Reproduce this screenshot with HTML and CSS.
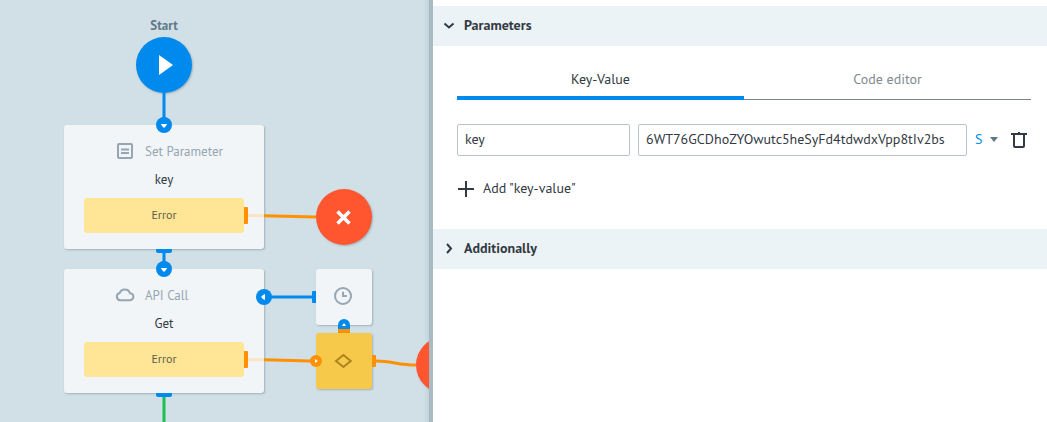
FILE: index.html
```html
<!DOCTYPE html>
<html lang="en">
<head>
<meta charset="utf-8">
<title>Process editor</title>
<link rel="stylesheet" href="styles.css">
</head>
<body>
<div class="editor">
  <main class="canvas">
    <div class="start-label">Start</div>
    <div class="circle circle-start"></div>
    <div class="circle circle-error"></div>
    <div class="circle circle-final"></div>

    <section class="node node-param">
      <header class="node-head">
        <svg class="node-icon" viewBox="0 0 20 18"><rect x="3" y="2" width="14" height="14" rx="1"/><path d="M6 7.5h8M6 11h8"/></svg>
        <span>Set Parameter</span>
      </header>
      <div class="node-name">key</div>
      <div class="node-error">Error</div>
    </section>

    <section class="node node-api">
      <header class="node-head">
        <svg class="node-icon" viewBox="0 0 20 18"><path d="M5.2 14.2a3.6 3.6 0 0 1-.5-7.1A5.5 5.5 0 0 1 15 7.2a3.5 3.5 0 0 1-.2 7z"/></svg>
        <span>API Call</span>
      </header>
      <div class="node-name">Get</div>
      <div class="node-error">Error</div>
    </section>

    <div class="tile tile-timer">
      <svg class="tile-icon" viewBox="0 0 20 20"><circle cx="10" cy="10" r="8"/><path d="M10 5.8V10h3.8"/></svg>
    </div>
    <div class="tile tile-condition">
      <svg class="tile-icon" viewBox="0 0 20 20"><path d="M3 11 10.400 5 17.800 11 10.400 17z"/></svg>
    </div>

    <svg class="wires" viewBox="0 0 429 422">
      <path class="wire blue" d="M164 93v26M164 253v10M271 297h42"/>
      <path class="wire green" d="M164 397v25"/>
      <path class="wire pale" d="M248 215.500 264 215.700M248 359.500 264 359.800"/>
      <path class="wire orange" d="M264 215.700 316 217M264 359.800 311 361M376 361c16 0 22 4 40 4"/>
      <g class="fill-blue">
        <circle cx="164" cy="125" r="8"/><circle cx="164" cy="269" r="8"/><circle cx="264" cy="297" r="8"/>
        <path d="M156 249h16v2a2 2 0 0 1-2 2h-12a2 2 0 0 1-2-2zM156 393h16v2a2 2 0 0 1-2 2h-12a2 2 0 0 1-2-2z"/>
        <path d="M316 291v12h-3a1 1 0 0 1-1-1v-10a1 1 0 0 1 1-1z"/>
        <path d="M338 329v-4a6 6 0 0 1 12 0v4z"/>
      </g>
      <g class="fill-orange">
        <path d="M244 207h3a1 1 0 0 1 1 1v15a1 1 0 0 1-1 1h-3zM244 351h3a1 1 0 0 1 1 1v15a1 1 0 0 1-1 1h-3z"/>
        <path d="M372 355h3a1 1 0 0 1 1 1v10a1 1 0 0 1-1 1h-3zM338 333v-4h12v4z"/>
        <circle cx="316" cy="361" r="6"/>
      </g>
      <g class="fill-white">
        <path d="M161 124h6l-1 2-2 2-2-2zM161 268h6l-1 2-2 2-2-2zM265 294v6l-2-1-2-2 2-2z"/>
        <path d="M342 326h4l-2-3zM315 359v4l3-2z"/>
        <path d="M159 55v20l14-10z"/>
      </g>
      <path class="cross" d="m337.500 211.500 12 12m0-12-12 12"/>
    </svg>
  </main>

  <aside class="panel">
    <div class="section-head">
      <svg class="chevron" viewBox="0 0 12 12"><path d="m1.500 3.500 4.500 4 4.500-4"/></svg>
      <span>Parameters</span>
    </div>
    <div class="section-body">
      <nav class="tabs">
        <a class="tab active">Key-Value</a>
        <a class="tab">Code editor</a>
      </nav>
      <div class="row">
        <div class="field field-key">key</div>
        <div class="field field-value">6WT76GCDhoZYOwutc5heSyFd4tdwdxVpp8tIv2bs</div>
        <div class="type"><span>S</span><svg class="caret" viewBox="0 0 8 5"><path d="M0 0h8L4 5z"/></svg></div>
        <svg class="trash" viewBox="0 0 16 18"><path d="M0 3h16M3 3v12a1 1 0 0 0 1 1h8a1 1 0 0 0 1-1V3M8 1v2"/></svg>
      </div>
      <div class="add">
        <svg class="plus" viewBox="0 0 16 16"><path d="M8 0v16M0 8h16"/></svg>
        <span>Add "key-value"</span>
      </div>
    </div>
    <div class="section-head">
      <svg class="chevron" viewBox="0 0 12 12"><path d="m4 1 4 4.500-4 4.500"/></svg>
      <span>Additionally</span>
    </div>
  </aside>
</div>
</body>
</html>
```

FILE: styles.css
```css
* { box-sizing: border-box; }
body {
  margin: 0;
  font: 13px/20px "PT Sans", "Noto Sans", sans-serif;
  color: #333a42;
  background: #fff;
}
svg { display: block; flex: none; fill: none; }
.editor { display: flex; width: 1047px; height: 422px; overflow: hidden; }

/* Flow canvas */
.canvas {
  position: relative;
  width: 429px;
  flex: none;
  overflow: hidden;
  background: linear-gradient(90deg, transparent 424px, rgba(120, 145, 160, .15) 429px), #d1dfe6;
}
.start-label {
  position: absolute; left: 124px; top: 16px; width: 80px;
  text-align: center; font-weight: 700; color: #5f7a88;
}
.circle {
  position: absolute; width: 56px; height: 56px; border-radius: 50%;
  background: #ff5630; box-shadow: 1px 1px 2px rgba(70, 95, 110, .35);
}
.circle-start { left: 136px; top: 37px; background: #008aee; }
.circle-error { left: 316px; top: 189px; }
.circle-final { left: 416px; top: 337px; }
.node {
  position: absolute; left: 64px; width: 200px; height: 124px;
  padding: 16px 20px;
  border-radius: 3px; background: #f1f5f7;
  box-shadow: 1px 1px 2px rgba(70, 95, 110, .35);
}
.node-param { top: 125px; }
.node-api { top: 269px; }
.node-head { display: flex; gap: 10px; align-items: center; height: 20px; padding-left: 31px; color: #95a5b1; }
.node-head span { padding-top: 2px; }
.node-icon { width: 20px; height: 18px; stroke: #95a5b1; stroke-width: 2; }
.node-name { margin-top: 9px; text-align: center; }
.node-error {
  height: 35px; margin-top: 8px; border-radius: 3px;
  background: #ffe596; color: #635d48;
  font-size: 12px; line-height: 34px; text-align: center;
}
.tile {
  position: absolute; left: 316px; width: 56px; height: 56px;
  padding: 17px; border-radius: 3px; background: #f1f5f7;
  box-shadow: 1px 1px 2px rgba(70, 95, 110, .35);
}
.tile-timer { top: 269px; }
.tile-condition { top: 333px; background: #f7c94b; }
.tile-icon { width: 20px; height: 20px; stroke: #95a5b1; stroke-width: 2; }
.tile-condition .tile-icon { stroke: #ad841e; }
.wires { position: absolute; inset: 0; width: 429px; height: 422px; }
.wire { stroke-width: 3; }
.blue { stroke: #008aee; }
.green { stroke: #1dbe55; }
.orange { stroke: #ff9100; }
.pale { stroke: #fce3c4; }
.fill-blue { fill: #008aee; }
.fill-orange { fill: #ff9100; }
.fill-white { fill: #fff; }
.cross { stroke: #fff; stroke-width: 3.600; }

/* Properties panel */
.panel { flex: 1; padding-top: 6px; border-left: 4px solid #a9bac5; background: #fff; font-size: 14px; }
.section-head {
  display: flex; align-items: center; gap: 9px;
  height: 40px; padding-left: 10px;
  background: #ebf3f7; font-weight: 700;
}
.section-head span, .add span, .type span { padding-bottom: 2px; }
.chevron { width: 12px; height: 12px; stroke: #333a42; stroke-width: 2; }
.section-body { height: 183px; padding: 14px 16px 0 24px; }
.tabs { display: flex; height: 40px; }
.tab {
  width: 50%; padding-top: 9px; border-bottom: 1px solid #748591;
  text-align: center; color: #808a92;
}
.tab.active { border-bottom: 4px solid #008aee; color: #333a42; }
.row { display: flex; align-items: center; gap: 8px; height: 32px; margin-top: 24px; }
.field {
  height: 32px; padding: 0 7px; border: 1px solid #b8c5cc; border-radius: 2px;
  line-height: 29px; white-space: nowrap;
}
.field-key { width: 173px; }
.field-value { width: 329px; }
.type { display: flex; align-items: center; gap: 8px; width: 28px; color: #008aee; }
.caret { width: 8px; height: 5px; margin-bottom: 2px; fill: #5f7886; }
.trash { width: 16px; height: 18px; stroke: #333a42; stroke-width: 2; }
.add { display: flex; align-items: center; gap: 9px; height: 20px; margin: 23px 0 0 1px; }
.plus { width: 16px; height: 16px; stroke: #333a42; stroke-width: 2; }
```
